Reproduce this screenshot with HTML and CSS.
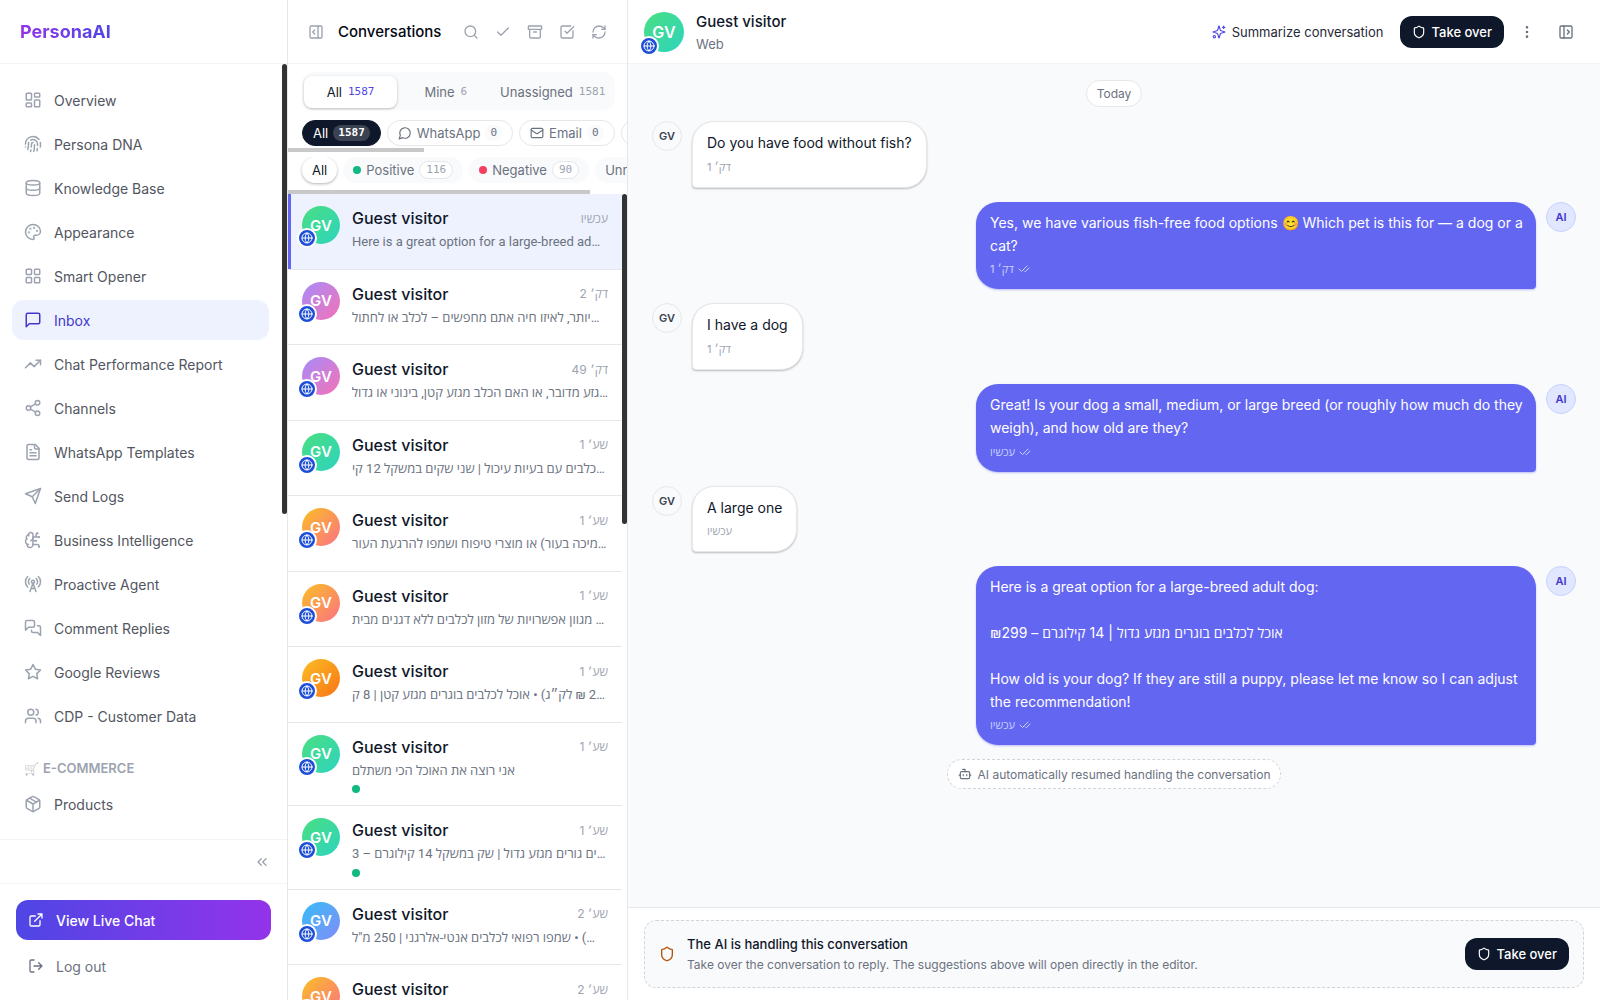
FILE: index.html
```html
<!DOCTYPE html>
<html lang="en">
<head>
<meta charset="utf-8">
<meta name="viewport" content="width=device-width, initial-scale=1">
<title>PersonaAI – Inbox</title>
<link rel="stylesheet" href="styles.css">
</head>
<body>
<svg class="sprite" aria-hidden="true">
  <symbol id="i-dashboard" viewBox="0 0 24 24"><rect width="7" height="9" x="3" y="3" rx="1"/><rect width="7" height="5" x="14" y="3" rx="1"/><rect width="7" height="9" x="14" y="12" rx="1"/><rect width="7" height="5" x="3" y="16" rx="1"/></symbol>
  <symbol id="i-finger" viewBox="0 0 24 24"><path d="M12 10a2 2 0 0 0-2 2c0 1.02-.1 2.51-.26 4"/><path d="M14 13.12c0 2.38 0 6.38-1 8.88"/><path d="M17.29 21.02c.12-.6.43-2.3.5-3.02"/><path d="M2 12a10 10 0 0 1 18-6"/><path d="M2 16h.01"/><path d="M21.8 16c.2-2 .131-5.354 0-6"/><path d="M5 19.5C5.5 18 6 15 6 12a6 6 0 0 1 .34-2"/><path d="M8.65 22c.21-.66.45-1.32.57-2"/><path d="M9 6.8a6 6 0 0 1 9 5.2v2"/></symbol>
  <symbol id="i-db" viewBox="0 0 24 24"><ellipse cx="12" cy="5" rx="9" ry="3"/><path d="M3 5v14a9 3 0 0 0 18 0V5"/><path d="M3 12a9 3 0 0 0 18 0"/></symbol>
  <symbol id="i-palette" viewBox="0 0 24 24"><circle cx="13.5" cy="6.5" r=".5"/><circle cx="17.5" cy="10.5" r=".5"/><circle cx="8.5" cy="7.5" r=".5"/><circle cx="6.5" cy="12.5" r=".5"/><path d="M12 2C6.5 2 2 6.5 2 12s4.500 10 10 10c.926 0 1.648-.746 1.648-1.688 0-.437-.18-.835-.437-1.125-.29-.289-.438-.652-.438-1.125a1.640 1.640 0 0 1 1.668-1.668h1.996c3.051 0 5.555-2.503 5.555-5.554C21.965 6.012 17.461 2 12 2z"/></symbol>
  <symbol id="i-grid" viewBox="0 0 24 24"><rect width="7" height="7" x="3" y="3" rx="1"/><rect width="7" height="7" x="14" y="3" rx="1"/><rect width="7" height="7" x="14" y="14" rx="1"/><rect width="7" height="7" x="3" y="14" rx="1"/></symbol>
  <symbol id="i-message" viewBox="0 0 24 24"><path d="M21 15a2 2 0 0 1-2 2H7l-4 4V5a2 2 0 0 1 2-2h14a2 2 0 0 1 2 2z"/></symbol>
  <symbol id="i-trend" viewBox="0 0 24 24"><path d="m22 7-8.500 8.500-5-5L2 17"/><path d="M16 7h6v6"/></symbol>
  <symbol id="i-share" viewBox="0 0 24 24"><circle cx="18" cy="5" r="3"/><circle cx="6" cy="12" r="3"/><circle cx="18" cy="19" r="3"/><path d="m8.590 13.510 6.830 3.980M15.410 6.510l-6.820 3.980"/></symbol>
  <symbol id="i-file" viewBox="0 0 24 24"><path d="M15 2H6a2 2 0 0 0-2 2v16a2 2 0 0 0 2 2h12a2 2 0 0 0 2-2V7Z"/><path d="M14 2v4a2 2 0 0 0 2 2h4"/><path d="M10 9H8M16 13H8M16 17H8"/></symbol>
  <symbol id="i-send" viewBox="0 0 24 24"><path d="m22 2-7 20-4-9-9-4Z"/><path d="M22 2 11 13"/></symbol>
  <symbol id="i-brain" viewBox="0 0 24 24"><path d="M12 5a3 3 0 1 0-5.997.125 4 4 0 0 0-2.526 5.770 4 4 0 0 0 .556 6.588A4 4 0 1 0 12 18Z"/><path d="M9 13a4.500 4.500 0 0 0 3-4"/><path d="M6.003 5.125A3 3 0 0 0 6.401 6.500"/><path d="M3.477 10.896a4 4 0 0 1 .585-.396"/><path d="M6 18a4 4 0 0 1-1.967-.516"/><path d="M12 13h4M12 18h6a2 2 0 0 1 2 2v1M12 8h8M16 8V5a2 2 0 0 1 2-2"/><circle cx="16" cy="13" r=".5"/><circle cx="18" cy="3" r=".5"/><circle cx="20" cy="21" r=".5"/><circle cx="20" cy="8" r=".5"/></symbol>
  <symbol id="i-radio" viewBox="0 0 24 24"><path d="M4.900 16.100C1 12.200 1 5.800 4.900 1.900"/><path d="M7.800 4.700a6.140 6.140 0 0 0-.8 7.500"/><circle cx="12" cy="9" r="2"/><path d="M16.200 4.800c2 2 2.260 5.110.8 7.470"/><path d="M19.100 1.900a9.960 9.960 0 0 1 0 14.100"/><path d="M9.500 18h5M8 22l4-11 4 11"/></symbol>
  <symbol id="i-messages" viewBox="0 0 24 24"><path d="M14 9a2 2 0 0 1-2 2H6l-4 4V4a2 2 0 0 1 2-2h8a2 2 0 0 1 2 2z"/><path d="M18 9h2a2 2 0 0 1 2 2v11l-4-4h-6a2 2 0 0 1-2-2v-1"/></symbol>
  <symbol id="i-star" viewBox="0 0 24 24"><path d="m12 2 3.090 6.260L22 9.270l-5 4.870 1.180 6.880L12 17.770l-6.180 3.250L7 14.140 2 9.270l6.910-1.010z"/></symbol>
  <symbol id="i-users" viewBox="0 0 24 24"><path d="M16 21v-2a4 4 0 0 0-4-4H6a4 4 0 0 0-4 4v2"/><circle cx="9" cy="7" r="4"/><path d="M22 21v-2a4 4 0 0 0-3-3.870M16 3.130a4 4 0 0 1 0 7.750"/></symbol>
  <symbol id="i-box" viewBox="0 0 24 24"><path d="M21 8a2 2 0 0 0-1-1.730l-7-4a2 2 0 0 0-2 0l-7 4A2 2 0 0 0 3 8v8a2 2 0 0 0 1 1.730l7 4a2 2 0 0 0 2 0l7-4A2 2 0 0 0 21 16Z"/><path d="m3.300 7 8.700 5 8.700-5M12 22V12M7.500 4.270l9 5.150"/></symbol>
  <symbol id="i-chevrons" viewBox="0 0 24 24"><path d="m11 17-5-5 5-5M18 17l-5-5 5-5"/></symbol>
  <symbol id="i-external" viewBox="0 0 24 24"><path d="M15 3h6v6M10 14 21 3M18 13v6a2 2 0 0 1-2 2H5a2 2 0 0 1-2-2V8a2 2 0 0 1 2-2h6"/></symbol>
  <symbol id="i-logout" viewBox="0 0 24 24"><path d="M9 21H5a2 2 0 0 1-2-2V5a2 2 0 0 1 2-2h4M16 17l5-5-5-5M21 12H9"/></symbol>
  <symbol id="i-panel-close" viewBox="0 0 24 24"><rect width="18" height="18" x="3" y="3" rx="2"/><path d="M15 3v18M10 15l-3-3 3-3"/></symbol>
  <symbol id="i-panel-open" viewBox="0 0 24 24"><rect width="18" height="18" x="3" y="3" rx="2"/><path d="M9 3v18M14 9l3 3-3 3"/></symbol>
  <symbol id="i-search" viewBox="0 0 24 24"><circle cx="11" cy="11" r="8"/><path d="m21 21-4.300-4.300"/></symbol>
  <symbol id="i-check" viewBox="0 0 24 24"><path d="M20 6 9 17l-5-5"/></symbol>
  <symbol id="i-archive" viewBox="0 0 24 24"><rect width="20" height="5" x="2" y="3" rx="1"/><path d="M4 8v11a2 2 0 0 0 2 2h12a2 2 0 0 0 2-2V8M10 12h4"/></symbol>
  <symbol id="i-checkbox" viewBox="0 0 24 24"><path d="M21 10.500V19a2 2 0 0 1-2 2H5a2 2 0 0 1-2-2V5a2 2 0 0 1 2-2h12.500"/><path d="m9 11 3 3L22 4"/></symbol>
  <symbol id="i-refresh" viewBox="0 0 24 24"><path d="M3 12a9 9 0 0 1 9-9 9.750 9.750 0 0 1 6.740 2.740L21 8"/><path d="M21 3v5h-5M21 12a9 9 0 0 1-9 9 9.750 9.750 0 0 1-6.740-2.740L3 16"/><path d="M8 16H3v5"/></symbol>
  <symbol id="i-circle-msg" viewBox="0 0 24 24"><path d="M7.900 20A9 9 0 1 0 4 16.100L2 22Z"/></symbol>
  <symbol id="i-mail" viewBox="0 0 24 24"><rect width="20" height="16" x="2" y="4" rx="2"/><path d="m22 7-8.970 5.700a1.940 1.940 0 0 1-2.060 0L2 7"/></symbol>
  <symbol id="i-globe" viewBox="0 0 24 24"><circle cx="12" cy="12" r="10"/><path d="M12 2a14.500 14.500 0 0 0 0 20 14.500 14.500 0 0 0 0-20M2 12h20"/></symbol>
  <symbol id="i-sparkles" viewBox="0 0 24 24"><path d="M9.937 15.500A2 2 0 0 0 8.500 14.063l-6.135-1.582a.5.5 0 0 1 0-.962L8.500 9.936A2 2 0 0 0 9.937 8.500l1.582-6.135a.5.5 0 0 1 .963 0L14.063 8.500A2 2 0 0 0 15.500 9.937l6.135 1.581a.5.5 0 0 1 0 .964L15.500 14.063a2 2 0 0 0-1.437 1.437l-1.582 6.135a.5.5 0 0 1-.963 0z"/><path d="M20 2v4M22 4h-4"/><circle cx="4" cy="20" r="2"/></symbol>
  <symbol id="i-shield" viewBox="0 0 24 24"><path d="M20 13c0 5-3.500 7.500-7.660 8.950a1 1 0 0 1-.67-.01C7.500 20.500 4 18 4 13V6a1 1 0 0 1 1-1c2 0 4.500-1.200 6.240-2.720a1.170 1.170 0 0 1 1.520 0C14.510 3.810 17 5 19 5a1 1 0 0 1 1 1z"/></symbol>
  <symbol id="i-dots" viewBox="0 0 24 24"><circle cx="12" cy="12" r="1"/><circle cx="12" cy="5" r="1"/><circle cx="12" cy="19" r="1"/></symbol>
  <symbol id="i-checks" viewBox="0 0 24 24"><path d="M18 6 7 17l-5-5M22 10l-7.500 7.500L13 16"/></symbol>
  <symbol id="i-bot" viewBox="0 0 24 24"><path d="M12 8V4H8"/><rect width="16" height="12" x="4" y="8" rx="2"/><path d="M2 14h2M20 14h2M15 13v2M9 13v2"/></symbol>
</svg>

<div class="app">
  <aside class="sidebar">
    <div class="brand"><a class="logo" href="#">PersonaAI</a></div>
    <div class="nav-wrap">
      <nav class="nav">
        <a class="nav-item" href="#"><svg class="ic ic-18"><use href="#i-dashboard"/></svg>Overview</a>
        <a class="nav-item" href="#"><svg class="ic ic-18"><use href="#i-finger"/></svg>Persona DNA</a>
        <a class="nav-item" href="#"><svg class="ic ic-18"><use href="#i-db"/></svg>Knowledge Base</a>
        <a class="nav-item" href="#"><svg class="ic ic-18"><use href="#i-palette"/></svg>Appearance</a>
        <a class="nav-item" href="#"><svg class="ic ic-18"><use href="#i-grid"/></svg>Smart Opener</a>
        <a class="nav-item is-active" href="#" aria-current="page"><svg class="ic ic-18"><use href="#i-message"/></svg>Inbox</a>
        <a class="nav-item" href="#"><svg class="ic ic-18"><use href="#i-trend"/></svg>Chat Performance Report</a>
        <a class="nav-item" href="#"><svg class="ic ic-18"><use href="#i-share"/></svg>Channels</a>
        <a class="nav-item" href="#"><svg class="ic ic-18"><use href="#i-file"/></svg>WhatsApp Templates</a>
        <a class="nav-item" href="#"><svg class="ic ic-18"><use href="#i-send"/></svg>Send Logs</a>
        <a class="nav-item" href="#"><svg class="ic ic-18"><use href="#i-brain"/></svg>Business Intelligence</a>
        <a class="nav-item" href="#"><svg class="ic ic-18"><use href="#i-radio"/></svg>Proactive Agent</a>
        <a class="nav-item" href="#"><svg class="ic ic-18"><use href="#i-messages"/></svg>Comment Replies</a>
        <a class="nav-item" href="#"><svg class="ic ic-18"><use href="#i-star"/></svg>Google Reviews</a>
        <a class="nav-item" href="#"><svg class="ic ic-18"><use href="#i-users"/></svg>CDP - Customer Data</a>
        <h2 class="nav-heading"><span class="nav-emoji">🛒</span>E-COMMERCE</h2>
        <a class="nav-item" href="#"><svg class="ic ic-18"><use href="#i-box"/></svg>Products</a>
      </nav>
      <div class="thumb thumb-nav"></div>
    </div>
    <div class="collapse"><button class="icon-btn" aria-label="Collapse menu"><svg class="ic ic-16"><use href="#i-chevrons"/></svg></button></div>
    <div class="side-foot">
      <a class="live" href="#"><svg class="ic ic-16"><use href="#i-external"/></svg>View Live Chat</a>
      <button class="logout"><svg class="ic ic-16"><use href="#i-logout"/></svg>Log out</button>
    </div>
  </aside>

  <section class="inbox">
    <header class="inbox-head">
      <button class="icon-btn" aria-label="Hide panel"><svg class="ic ic-16"><use href="#i-panel-close"/></svg></button>
      <h1 class="inbox-title">Conversations</h1>
      <button class="icon-btn" aria-label="Search"><svg class="ic ic-16"><use href="#i-search"/></svg></button>
      <button class="icon-btn" aria-label="Resolved"><svg class="ic ic-16"><use href="#i-check"/></svg></button>
      <button class="icon-btn" aria-label="Archive"><svg class="ic ic-16"><use href="#i-archive"/></svg></button>
      <button class="icon-btn" aria-label="Select"><svg class="ic ic-16"><use href="#i-checkbox"/></svg></button>
      <button class="icon-btn" aria-label="Refresh"><svg class="ic ic-16"><use href="#i-refresh"/></svg></button>
    </header>
    <div class="tabs">
      <button class="tab is-active">All <span class="num">1587</span></button>
      <button class="tab">Mine <span class="num">6</span></button>
      <button class="tab">Unassigned <span class="num">1581</span></button>
    </div>
    <div class="chips">
      <button class="chip chip-dark">All <span class="count">1587</span></button>
      <button class="chip"><svg class="ic ic-14"><use href="#i-circle-msg"/></svg>WhatsApp <span class="count">0</span></button>
      <button class="chip"><svg class="ic ic-14"><use href="#i-mail"/></svg>Email <span class="count">0</span></button>
      <button class="chip" aria-label="Web"><svg class="ic ic-14"><use href="#i-globe"/></svg></button>
    </div>
    <div class="hbar hbar-short"></div>
    <div class="chips chips-mood">
      <button class="mood is-active">All</button>
      <button class="mood"><span class="dot"></span>Positive <span class="pill">116</span></button>
      <button class="mood"><span class="dot dot-red"></span>Negative <span class="pill">90</span></button>
      <button class="mood">Unread</button>
    </div>
    <div class="hbar hbar-long"></div>
    <div class="list-wrap">
      <ul class="list">
        <li class="row is-active"><div class="avatar green">GV<span class="badge"><svg class="ic ic-12"><use href="#i-globe"/></svg></span></div><div class="row-main"><div class="row-top"><h3 class="name">Guest visitor</h3><time class="when" dir="rtl">עכשיו</time></div><p class="preview">Here is a great option for a large-breed ad…</p><div class="row-meta"></div></div></li>
        <li class="row"><div class="avatar purple">GV<span class="badge"><svg class="ic ic-12"><use href="#i-globe"/></svg></span></div><div class="row-main"><div class="row-top"><h3 class="name">Guest visitor</h3><time class="when" dir="rtl">דק׳ 2</time></div><p class="preview" dir="rtl">…יותר, לאיזו חיה אתם מחפשים – לכלב או לחתול</p><div class="row-meta"></div></div></li>
        <li class="row"><div class="avatar purple">GV<span class="badge"><svg class="ic ic-12"><use href="#i-globe"/></svg></span></div><div class="row-main"><div class="row-top"><h3 class="name">Guest visitor</h3><time class="when" dir="rtl">דק׳ 49</time></div><p class="preview" dir="rtl">…גזע מדובר, או האם הכלב מגזע קטן, בינוני או גדול</p><div class="row-meta"></div></div></li>
        <li class="row"><div class="avatar green">GV<span class="badge"><svg class="ic ic-12"><use href="#i-globe"/></svg></span></div><div class="row-main"><div class="row-top"><h3 class="name">Guest visitor</h3><time class="when" dir="rtl">שע׳ 1</time></div><p class="preview" dir="rtl">…כלבים עם בעיות עיכול | שני שקים במשקל 12 קי</p><div class="row-meta"></div></div></li>
        <li class="row"><div class="avatar coral">GV<span class="badge"><svg class="ic ic-12"><use href="#i-globe"/></svg></span></div><div class="row-main"><div class="row-top"><h3 class="name">Guest visitor</h3><time class="when" dir="rtl">שע׳ 1</time></div><p class="preview" dir="rtl">…מיכה בעור) או מוצרי טיפוח ושמפו להרגעת העור</p><div class="row-meta"></div></div></li>
        <li class="row"><div class="avatar coral">GV<span class="badge"><svg class="ic ic-12"><use href="#i-globe"/></svg></span></div><div class="row-main"><div class="row-top"><h3 class="name">Guest visitor</h3><time class="when" dir="rtl">שע׳ 1</time></div><p class="preview" dir="rtl">… מגוון אפשרויות של מזון לכלבים ללא דגנים מבית</p><div class="row-meta"></div></div></li>
        <li class="row"><div class="avatar amber">GV<span class="badge"><svg class="ic ic-12"><use href="#i-globe"/></svg></span></div><div class="row-main"><div class="row-top"><h3 class="name">Guest visitor</h3><time class="when" dir="rtl">שע׳ 1</time></div><p class="preview" dir="rtl">…2 ₪ לק״ג) • אוכל לכלבים בוגרים מגזע קטן | 8 ק</p><div class="row-meta"></div></div></li>
        <li class="row"><div class="avatar green">GV<span class="badge"><svg class="ic ic-12"><use href="#i-globe"/></svg></span></div><div class="row-main"><div class="row-top"><h3 class="name">Guest visitor</h3><time class="when" dir="rtl">שע׳ 1</time></div><p class="preview" dir="rtl">אני רוצה את האוכל הכי משתלם</p><div class="row-meta"><span class="dot"></span></div></div></li>
        <li class="row"><div class="avatar green">GV<span class="badge"><svg class="ic ic-12"><use href="#i-globe"/></svg></span></div><div class="row-main"><div class="row-top"><h3 class="name">Guest visitor</h3><time class="when" dir="rtl">שע׳ 1</time></div><p class="preview" dir="rtl">…ים גורים מגזע גדול | שק במשקל 14 קילוגרם – 3</p><div class="row-meta"><span class="dot"></span></div></div></li>
        <li class="row"><div class="avatar blue">GV<span class="badge"><svg class="ic ic-12"><use href="#i-globe"/></svg></span></div><div class="row-main"><div class="row-top"><h3 class="name">Guest visitor</h3><time class="when" dir="rtl">שע׳ 2</time></div><p class="preview" dir="rtl">…) • שמפו רפואי לכלבים אנטי-אלרגני | 250 מ"ל</p><div class="row-meta"></div></div></li>
        <li class="row"><div class="avatar coral">GV<span class="badge"><svg class="ic ic-12"><use href="#i-globe"/></svg></span></div><div class="row-main"><div class="row-top"><h3 class="name">Guest visitor</h3><time class="when" dir="rtl">שע׳ 2</time></div><div class="row-meta"></div></div></li>
      </ul>
      <div class="thumb thumb-list"></div>
    </div>
  </section>

  <main class="chat">
    <header class="chat-head">
      <div class="avatar avatar-lg green">GV<span class="badge"><svg class="ic ic-12"><use href="#i-globe"/></svg></span></div>
      <div class="who"><h2 class="who-name">Guest visitor</h2><p class="who-channel">Web</p></div>
      <button class="summarize"><svg class="ic ic-14"><use href="#i-sparkles"/></svg>Summarize conversation</button>
      <button class="takeover"><svg class="ic ic-14"><use href="#i-shield"/></svg>Take over</button>
      <button class="icon-btn tool" aria-label="More"><svg class="ic ic-16"><use href="#i-dots"/></svg></button>
      <button class="icon-btn tool" aria-label="Details"><svg class="ic ic-16"><use href="#i-panel-open"/></svg></button>
    </header>
    <div class="thread">
      <div class="day">Today</div>
      <article class="msg"><span class="msg-av">GV</span><div class="bubble"><p>Do you have food without fish?</p><div class="meta"><time dir="rtl">דק׳ 1</time></div></div></article>
      <article class="msg msg-ai"><div class="bubble"><p>Yes, we have various fish-free food options 😊 Which pet is this for — a dog or a cat?</p><div class="meta"><time dir="rtl">דק׳ 1</time><svg class="ic ic-12"><use href="#i-checks"/></svg></div></div><span class="msg-av">AI</span></article>
      <article class="msg"><span class="msg-av">GV</span><div class="bubble"><p>I have a dog</p><div class="meta"><time dir="rtl">דק׳ 1</time></div></div></article>
      <article class="msg msg-ai"><div class="bubble"><p>Great! Is your dog a small, medium, or large breed (or roughly how much do they weigh), and how old are they?</p><div class="meta"><time dir="rtl">עכשיו</time><svg class="ic ic-12"><use href="#i-checks"/></svg></div></div><span class="msg-av">AI</span></article>
      <article class="msg"><span class="msg-av">GV</span><div class="bubble"><p>A large one</p><div class="meta"><time dir="rtl">עכשיו</time></div></div></article>
      <article class="msg msg-ai"><div class="bubble"><p>Here is a great option for a large-breed adult dog:</p><p class="para" dir="rtl">אוכל לכלבים בוגרים מגזע גדול | 14 קילוגרם – ₪299</p><p class="para">How old is your dog? If they are still a puppy, please let me know so I can adjust the recommendation!</p><div class="meta"><time dir="rtl">עכשיו</time><svg class="ic ic-12"><use href="#i-checks"/></svg></div></div><span class="msg-av">AI</span></article>
      <div class="system"><svg class="ic ic-14"><use href="#i-bot"/></svg>AI automatically resumed handling the conversation</div>
    </div>
    <footer class="chat-foot">
      <div class="notice">
        <svg class="ic ic-16 notice-ic"><use href="#i-shield"/></svg>
        <div class="notice-text"><h3 class="notice-title">The AI is handling this conversation</h3><p class="notice-sub">Take over the conversation to reply. The suggestions above will open directly in the editor.</p></div>
        <button class="takeover"><svg class="ic ic-14"><use href="#i-shield"/></svg>Take over</button>
      </div>
    </footer>
  </main>
</div>
</body>
</html>
```
FILE: styles.css
```css
* { box-sizing: border-box; }
body {
  margin: 0;
  font-family: Inter, "Open Sans", "Noto Sans", sans-serif;
  font-size: 14px;
  color: #0f172a;
  background: #fff;
}
h1, h2, h3, p, ul { margin: 0; padding: 0; font-weight: 400; }
ul { list-style: none; }
a { color: inherit; text-decoration: none; }
button { font: inherit; color: inherit; border: 0; background: none; padding: 0; white-space: nowrap; }

.sprite { display: none; }
.ic { flex: none; fill: none; stroke: currentColor; stroke-width: 2; stroke-linecap: round; stroke-linejoin: round; }
.ic-12 { width: 12px; height: 12px; }
.ic-14 { width: 14px; height: 14px; }
.ic-16 { width: 16px; height: 16px; }
.ic-18 { width: 18px; height: 18px; color: #9ca3af; }
.icon-btn { display: flex; align-items: center; justify-content: center; width: 32px; height: 32px; color: #9ca3af; }

.app { display: grid; grid-template-columns: 288px 340px minmax(0, 1fr); height: 100vh; overflow: hidden; }

/* Sidebar */
.sidebar { display: flex; flex-direction: column; min-height: 0; border-right: 1px solid #e5e7eb; }
.brand { display: flex; align-items: center; height: 64px; padding: 0 20px; border-bottom: 1px solid #f3f4f6; }
.logo { font-size: 18px; font-weight: 700; line-height: 28px; color: transparent; background: linear-gradient(90deg, #9333ea, #4f46e5); -webkit-background-clip: text; background-clip: text; }
.nav-wrap { position: relative; flex: 1; min-height: 0; overflow: hidden; }
.nav { display: flex; flex-direction: column; gap: 4px; padding: 16px 18px 16px 12px; }
.nav-item { display: flex; align-items: center; gap: 12px; height: 40px; padding: 0 12px; border-radius: 12px; color: #52565f; font-size: 14px; }
.nav-item.is-active { background: #eef2ff; color: #4338ca; }
.nav-item.is-active .ic { color: #4338ca; }
.nav-heading { display: flex; align-items: center; gap: 4px; height: 16px; margin: 20px 0 4px; padding: 0 12px; font-size: 13px; font-weight: 600; color: #9ca3af; }
.nav-emoji { font-size: 12px; filter: grayscale(1); opacity: .6; }
.thumb { position: absolute; top: 0; right: 0; width: 5px; border-radius: 3px; background: #333; }
.thumb-nav { height: 58%; }
.collapse { display: flex; align-items: center; justify-content: flex-end; height: 44px; padding: 0 9px; border-top: 1px solid #f3f4f6; }
.side-foot { display: flex; flex-direction: column; gap: 6px; padding: 16px 16px 14px; border-top: 1px solid #f3f4f6; }
.live, .logout { display: flex; align-items: center; gap: 12px; height: 40px; padding: 0 12px; border-radius: 12px; font-size: 14px; }
.live { color: #fff; font-weight: 500; background: linear-gradient(90deg, #4f46e5, #9333ea); }
.logout { color: #6b7280; }

/* Conversation list */
.inbox { display: flex; flex-direction: column; min-width: 0; min-height: 0; overflow: hidden; border-right: 1px solid #e5e7eb; }
.inbox-head { display: flex; flex: none; align-items: center; height: 64px; padding: 0 12px; border-bottom: 1px solid #f3f4f6; }
.inbox-title { flex: 1; padding-left: 6px; font-size: 15px; font-weight: 500; color: #030712; }
.tabs { display: grid; flex: none; grid-template-columns: 4fr 4fr 5fr; gap: 2px; margin: 8px 12px 0 14px; padding: 4px 4px 2px 2px; border-radius: 12px; background: #f9fafb; }
.tab { display: flex; align-items: center; justify-content: center; gap: 6px; height: 32px; border-radius: 8px; font-size: 13px; color: #6b7280; }
.tab.is-active { background: #fff; color: #111827; box-shadow: 0 1px 3px rgba(0, 0, 0, .25); }
.num, .count, .pill { font-family: "DejaVu Sans Mono", "Liberation Mono", monospace; font-size: 11px; line-height: 16px; }
.num { color: #9ca3af; }
.tab.is-active .num { color: #4f46e5; }
.chips { display: flex; flex: none; gap: 6px; margin-top: 10px; padding: 0 14px 2px; overflow: hidden; }
.chip { display: flex; flex: none; align-items: center; gap: 5px; height: 26px; padding: 0 10px; border: 1px solid #e5e7eb; border-radius: 13px; font-size: 13px; color: #6b7280; }
.count { padding: 0 5px; border-radius: 8px; background: #f9fafb; }
.chip-dark { border-color: #0f172a; background: #0f172a; color: #fff; }
.chip-dark .count { background: #3b4252; font-weight: 700; }
.hbar { flex: none; height: 4px; background: #c8c8c8; }
.hbar-short { width: 40%; }
.hbar-long { width: 89%; }
.chips-mood { margin-top: 5px; padding-bottom: 7px; }
.mood { display: flex; flex: none; align-items: center; gap: 5px; height: 26px; padding: 0 10px; border-radius: 13px; background: #f9fafb; font-size: 13px; color: #6b7280; }
.mood.is-active { background: #fff; color: #111827; box-shadow: 0 1px 3px rgba(0, 0, 0, .3); }
.dot { display: block; width: 8px; height: 8px; border-radius: 50%; background: #10b981; }
.dot-red { background: #f43f5e; }
.pill { padding: 0 6px; border: 1px solid #e5e7eb; border-radius: 9px; background: #fff; color: #9ca3af; }
.list-wrap { position: relative; flex: 1; min-height: 0; overflow: hidden; }
.thumb-list { height: 41%; }
.row { display: flex; gap: 12px; margin-right: 5px; padding: 12px 14px; border-bottom: 1px solid #e5e7eb; }
.row.is-active { background: #eef2ff; box-shadow: inset 3px 0 #6366f1; }
.row-main { flex: 1; min-width: 0; }
.row-top { display: flex; align-items: center; justify-content: space-between; height: 24px; }
.name { font-size: 16px; font-weight: 500; line-height: 24px; }
.when { font-size: 12px; color: #9ca3af; }
.preview { margin-top: 2px; overflow: hidden; font-family: Roboto, "Open Sans", "Noto Sans", sans-serif; font-size: 13px; line-height: 1.5; text-align: left; white-space: nowrap; color: #6b7280; }
.row-meta { margin-top: 5px; }

.avatar { position: relative; display: flex; flex: none; align-items: center; justify-content: center; width: 38px; height: 38px; border-radius: 50%; color: #fff; font-size: 15px; font-weight: 600; }
.avatar-lg { width: 40px; height: 40px; font-size: 16px; }
.badge { position: absolute; left: -5px; bottom: -4px; display: flex; align-items: center; justify-content: center; width: 20px; height: 20px; border: 2px solid #fff; border-radius: 50%; background: #1d4ed8; }
.green { background: linear-gradient(135deg, #4ade80, #2dd4bf); }
.purple { background: linear-gradient(135deg, #a78bfa, #f472b6); }
.coral { background: linear-gradient(135deg, #fbbf24, #fb7185); }
.amber { background: linear-gradient(135deg, #fbbf24, #f97316); }
.blue { background: linear-gradient(135deg, #38bdf8, #818cf8); }

/* Chat */
.chat { display: flex; flex-direction: column; min-width: 0; min-height: 0; }
.chat-head { display: flex; flex: none; align-items: center; height: 64px; padding: 0 18px 0 16px; border-bottom: 1px solid #f3f4f6; }
.who { flex: 1; padding-left: 12px; }
.who-name { font-size: 15px; font-weight: 500; line-height: 24px; }
.who-channel { font-size: 13px; line-height: 20px; color: #6b7280; }
.summarize { display: flex; align-items: center; gap: 6px; margin-right: 16px; font-size: 13px; color: #1f2937; }
.summarize .ic { color: #4f46e5; }
.takeover { display: flex; align-items: center; gap: 6px; height: 32px; padding: 0 12px; border-radius: 12px; background: #0f172a; color: #fff; font-size: 13px; font-weight: 500; }
.tool { color: #6b7280; margin-left: 7px; }
.thread { display: flex; flex: 1; flex-direction: column; gap: 14px; min-height: 0; padding: 16px 24px; overflow: hidden; background: #f9fafc; }
.day { align-self: center; flex: none; height: 27px; padding: 0 10px; border: 1px solid #e5e7eb; border-radius: 14px; background: #fff; font-size: 12px; line-height: 25px; color: #6b7280; }
.msg { display: flex; flex: none; align-items: flex-start; gap: 10px; }
.msg-ai { justify-content: flex-end; }
.msg-av { display: flex; flex: none; align-items: center; justify-content: center; width: 30px; height: 30px; border: 1px solid #e5e7eb; border-radius: 50%; font-size: 11px; font-weight: 600; color: #374151; }
.msg-ai .msg-av { border-color: #c7d2fe; background: #e0e7ff; color: #4338ca; }
.bubble { max-width: 560px; padding: 10px 14px 12px; border: 1px solid #e5e7eb; border-radius: 22px 22px 22px 4px; background: #fff; box-shadow: 0 1px 2px rgba(0, 0, 0, .25); line-height: 1.625; }
.msg-ai .bubble { padding: 10px 8px 12px 14px; border: 0; border-radius: 22px 22px 4px 22px; background: #6366f1; color: #fff; box-shadow: 0 1px 2px rgba(99, 102, 241, .4); }
.para { margin-top: 23px; text-align: left; }
.meta { display: flex; align-items: center; gap: 4px; margin-top: 4px; font-size: 11px; line-height: 16px; color: #9ca3af; }
.msg-ai .meta { color: #c7d2fe; }
.system { display: flex; flex: none; align-items: center; align-self: center; gap: 6px; height: 30px; padding: 0 10px; border: 1px dashed #d1d5db; border-radius: 15px; background: #fff; font-size: 12px; color: #6b7280; }
.chat-foot { flex: none; padding: 12px 16px; border-top: 1px solid #e5e7eb; }
.notice { display: flex; align-items: center; gap: 12px; padding: 12px 14px; border: 1px dashed #d1d5db; border-radius: 12px; background: #f9fafb; }
.notice-ic { color: #b45309; }
.notice-text { flex: 1; }
.notice-title { font-size: 13px; font-weight: 500; line-height: 22px; }
.notice-sub { font-size: 12px; line-height: 20px; color: #6b7280; }
```
